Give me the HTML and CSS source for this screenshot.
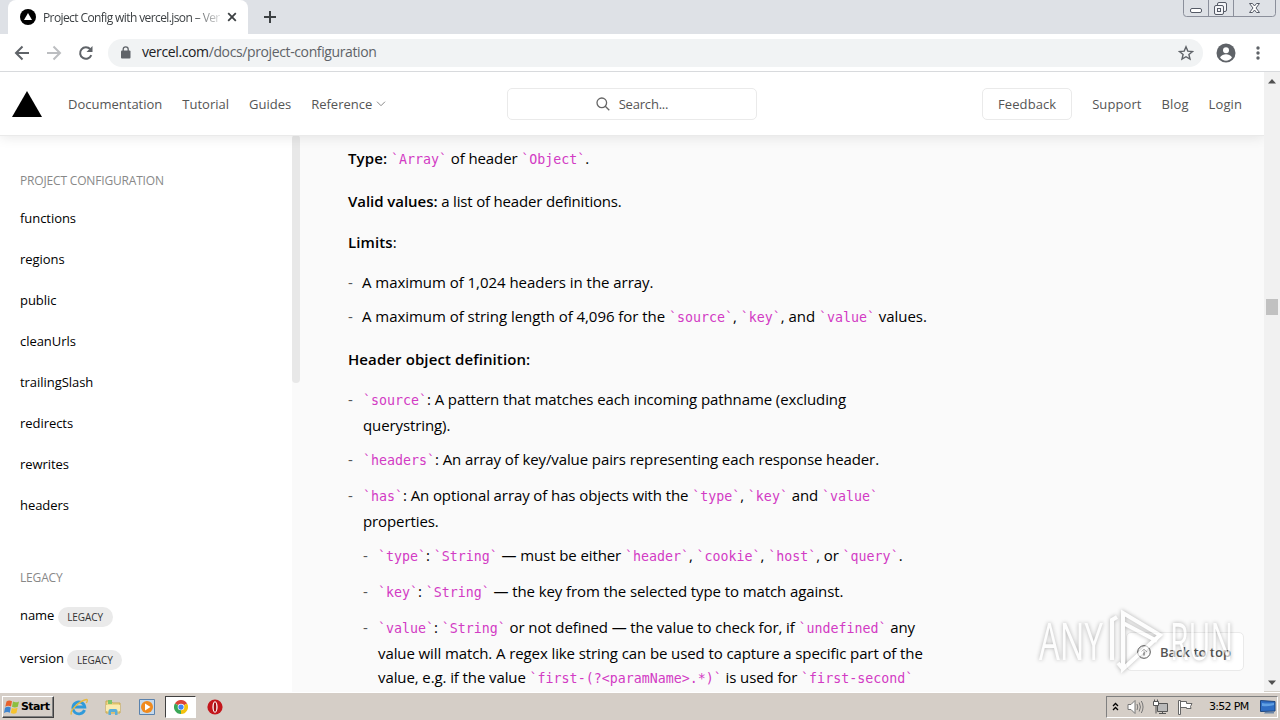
FILE: index.html
```html
<!DOCTYPE html>
<html lang="en">
<head>
    <meta charset="UTF-8">
    <meta name="viewport" content="width=device-width, initial-scale=1.0">
    <title>Project Config with vercel.json</title>
    <link rel="stylesheet" href="styles.css">
</head>
<body>
    <div class="screen">
        <div class="tabstrip">
            <div class="tab">
                <svg class="favicon" width="16" height="16" viewBox="0 0 16 16"><circle cx="8" cy="8" r="8"/><path d="M8 4l4 7H4z" fill="#fff"/></svg>
                <span class="tab-title">Project Config with vercel.json – Ver</span>
                <svg class="tab-close" width="10" height="10" viewBox="0 0 10 10"><path d="M1.2 1.2l7.6 7.6M8.8 1.2l-7.6 7.6" stroke="#3c4043" stroke-width="1.8"/></svg>
            </div>
            <svg class="new-tab" width="12" height="12" viewBox="0 0 12 12"><path d="M6 0v12M0 6h12" stroke="#3c4043" stroke-width="2"/></svg>
            <svg class="window-buttons" width="94" height="17" viewBox="0 0 94 17" fill="none" stroke="#8b8f9b">
                <path d="M.5 0v13.5q0 3 3 3h86q3 0 3-3V0M25.500 0v16M50.500 0v16"/>
                <rect x="7.500" y="8.500" width="11" height="4" rx="1.500" fill="#fff" stroke="#555a66"/>
                <g stroke="#555a66" fill="#f4f5f8"><rect x="34.500" y="2.500" width="9" height="9" rx="1.500"/><rect x="31.500" y="5.500" width="9" height="9" rx="1.500"/><rect x="34.500" y="8.500" width="3" height="3"/></g>
                <path d="M66.500 3.500h3l2 2.500 2-2.500h3l-3.500 4.500 3.500 4.500h-3l-2-2.500-2 2.500h-3L70 8z" fill="#fff" stroke="#555a66"/>
            </svg>
        </div>

        <div class="toolbar">
            <svg class="nav-back" width="16" height="16" viewBox="0 0 16 16" fill="none" stroke="#5f6368" stroke-width="2"><path d="M15 8H2M8.500 1.500L2 8l6.500 6.500"/></svg>
            <svg class="nav-forward" width="16" height="16" viewBox="0 0 16 16" fill="none" stroke="#bcbec1" stroke-width="2"><path d="M1 8h13M7.500 1.500L14 8l-6.500 6.500"/></svg>
            <svg class="nav-reload" width="16" height="16" viewBox="0 0 16 16" fill="none"><path d="M13.300 10.200A5.800 5.800 0 1 1 12.300 4.200" stroke="#5f6368" stroke-width="2"/><path d="M14.500 1v6h-6z" fill="#5f6368"/></svg>
            <div class="omnibox">
                <svg class="lock" width="10" height="13" viewBox="0 0 10 13"><rect y="4.500" width="9.500" height="8" rx="1" fill="#5f6368"/><path d="M2.200 5V3.300a2.500 2.500 0 0 1 5 0V5" fill="none" stroke="#5f6368" stroke-width="1.300"/></svg>
                <span class="url"><b>vercel.com</b>/docs/project-configuration</span>
                <svg class="star" width="16" height="16" viewBox="0 0 16 16"><path d="M8 1.800l1.800 4.300 4.700.4-3.600 3 1.100 4.600L8 11.700l-4 2.400 1.100-4.600-3.600-3 4.700-.4z" fill="none" stroke="#5f6368" stroke-width="1.400"/></svg>
            </div>
            <svg class="profile" width="20" height="20" viewBox="0 0 20 20"><circle cx="10" cy="10" r="9.500" fill="#5f6368"/><circle cx="10" cy="7.200" r="3" fill="#fff"/><path d="M4 14.300c1.400-2.100 3.700-3 6-3s4.600.9 6 3a7 7 0 0 1-12 0z" fill="#fff"/></svg>
            <svg class="kebab" width="4" height="16" viewBox="0 0 4 16" fill="#5f6368"><circle cx="2" cy="3" r="1.700"/><circle cx="2" cy="8" r="1.700"/><circle cx="2" cy="13" r="1.700"/></svg>
        </div>

        <div class="viewport">
            <div class="page">
                <header class="header">
                    <svg class="logo" width="30" height="26" viewBox="0 0 30 26"><path d="M15 0l15 26H0z"/></svg>
                    <nav class="nav">
                        <a>Documentation</a>
                        <a>Tutorial</a>
                        <a>Guides</a>
                        <a>Reference</a>
                        <svg class="chevron" width="10" height="6" viewBox="0 0 10 6"><path d="M1 .7l4 4 4-4" fill="none" stroke="#888"/></svg>
                    </nav>
                    <div class="search">
                        <svg width="14" height="14" viewBox="0 0 14 14" fill="none" stroke="#666" stroke-width="1.300"><circle cx="5.800" cy="5.800" r="4.800"/><path d="M9.300 9.300l4 4"/></svg>
                        <span>Search...</span>
                    </div>
                    <nav class="nav nav-right">
                        <a class="feedback">Feedback</a>
                        <a>Support</a>
                        <a>Blog</a>
                        <a>Login</a>
                    </nav>
                </header>

                <div class="content">
                    <aside class="sidebar">
                        <h4>PROJECT CONFIGURATION</h4>
                        <ul>
                            <li>functions</li>
                            <li>regions</li>
                            <li>public</li>
                            <li>cleanUrls</li>
                            <li>trailingSlash</li>
                            <li>redirects</li>
                            <li>rewrites</li>
                            <li>headers</li>
                        </ul>
                        <h4 class="legacy-title">LEGACY</h4>
                        <ul class="legacy">
                            <li>name <em>LEGACY</em></li>
                            <li>version <em>LEGACY</em></li>
                        </ul>
                    </aside>
                    <div class="sidebar-thumb"></div>

                    <main class="docs">
                        <p><b>Type:</b> <code>`Array`</code> of header <code>`Object`</code>.</p>
                        <p class="valid"><b>Valid values:</b> a list of header definitions.</p>
                        <p class="limits"><b>Limits</b>:</p>
                        <ul class="list limits-list">
                            <li>A maximum of 1,024 headers in the array.</li>
                            <li>A maximum of string length of 4,096 for the <code>`source`</code>, <code>`key`</code>, and <code>`value`</code> values.</li>
                        </ul>
                        <p class="definition"><b>Header object definition:</b></p>
                        <ul class="list fields">
                            <li><code>`source`</code>: A pattern that matches each incoming pathname (excluding<br>querystring).</li>
                            <li class="headers"><code>`headers`</code>: An array of key/value pairs representing each response header.</li>
                            <li><code>`has`</code>: An optional array of has objects with the <code>`type`</code>, <code>`key`</code> and <code>`value`</code><br>properties.
                                <ul class="list nested">
                                    <li><code>`type`</code>: <code>`String`</code> — must be either <code>`header`</code>, <code>`cookie`</code>, <code>`host`</code>, or <code>`query`</code>.</li>
                                    <li><code>`key`</code>: <code>`String`</code> — the key from the selected type to match against.</li>
                                    <li><code>`value`</code>: <code>`String`</code> or not defined — the value to check for, if <code>`undefined`</code> any<br>value will match. A regex like string can be used to capture a specific part of the
                                        <span class="last-line">value, e.g. if the value <code>`first-(?&lt;paramName&gt;.*)`</code> is used for <code>`first-second`</code></span></li>
                                </ul>
                            </li>
                        </ul>
                    </main>
                </div>

                <a class="back-to-top">
                    <svg width="14" height="14" viewBox="0 0 14 14" fill="none" stroke="#555"><circle cx="7" cy="7" r="6.300"/><path d="M7 10.500V4M4.500 6.500L7 4l2.500 2.500"/></svg>
                    <span>Back to top</span>
                </a>
            </div>
            <div class="scrollbar">
                <svg width="8" height="5" viewBox="0 0 8 5"><path d="M4 0l4 4.500H0z" fill="#505050"/></svg>
                <div class="scrollbar-thumb"></div>
                <svg width="8" height="5" viewBox="0 0 8 5"><path d="M0 .5h8L4 5z" fill="#505050"/></svg>
            </div>
        </div>

        <div class="taskbar">
            <div class="start">
                <svg width="16" height="16" viewBox="0 0 16 16"><path d="M2.500 2.500Q5 .8 8 2.300L7 7.500Q4 6 1.300 7.700z" fill="#e8622c"/><path d="M9 2.600q3 1.400 6-.2l-1.200 5.300q-2.800 1.500-5.800.1z" fill="#8cbf3f"/><path d="M1 8.800q3-1.800 5.800-.3l-1 5.200Q3 12.300 0 14z" fill="#3f85cf"/><path d="M7.800 8.900q3 1.300 5.800-.1l-1.200 5.200q-2.600 1.600-5.600 0z" fill="#f6c32e"/></svg>
                <span>Start</span>
            </div>
            <div class="quick">
                <svg width="18" height="18" viewBox="0 0 18 18" fill="none"><path d="M14.500 12a6 6 0 1 1 .3-3H5" stroke="#2f9ada" stroke-width="2.800"/><path d="M1.500 16.500C-1 13 10 2.500 16.500 1.500c1.500 0 .6 2.300-.2 3.500" stroke="#e8b93c" stroke-width="1.300"/></svg>
            </div>
            <div class="quick">
                <svg width="18" height="18" viewBox="0 0 18 18"><path d="M2 3h5l1.500 2H16v10H2z" fill="#efd787" stroke="#c9a94f"/><path d="M4 2h4v4H4z" fill="#7cc36a"/><path d="M2 7h14v6H2z" fill="#faebaf"/><path d="M4.500 17v-4q0-2 2-2h5q2 0 2 2v4h-2.500v-3H7v3z" fill="#5aaed8"/></svg>
            </div>
            <div class="quick">
                <svg width="16" height="16" viewBox="0 0 16 16"><path d="M.5.500h15v15H.5z" fill="#c5d9ec" stroke="#5a82ad"/><circle cx="8" cy="8" r="6" fill="#f08a1d"/><path d="M6 4.500L11.500 8 6 11.500z" fill="#fff"/></svg>
            </div>
            <div class="quick active">
                <svg width="14" height="14" viewBox="0 0 16 16"><path d="M8 8L1.070 4A8 8 0 0 1 14.930 4z" fill="#db4437"/><path d="M8 8l6.930-4A8 8 0 0 1 8 16z" fill="#f4c20d"/><path d="M8 8v8A8 8 0 0 1 1.070 4z" fill="#3aa757"/><circle cx="8" cy="8" r="3.800" fill="#fff"/><circle cx="8" cy="8" r="3" fill="#4285f4"/></svg>
            </div>
            <div class="quick">
                <svg width="16" height="16" viewBox="0 0 16 16"><circle cx="8" cy="8" r="7.600" fill="#c4161c"/><ellipse cx="8" cy="8" rx="2.600" ry="5.700" fill="#fff"/><ellipse cx="8" cy="8" rx="1.300" ry="4.800" fill="#a30d12"/></svg>
            </div>
            <div class="tray">
                <svg width="7" height="9" viewBox="0 0 7 9" fill="none" stroke="#000" stroke-width="1.300"><path d="M1 4l2.500-2.500L6 4M1 8l2.500-2.500L6 8"/></svg>
                <svg width="17" height="16" viewBox="0 0 17 16" fill="#fff" stroke="#777"><path d="M1 5.500h3l4-4v13l-4-4H1z"/><path d="M10 5q1.500 3 0 6M12.200 3.500q2.500 4.500 0 9M14.300 2q3.500 6 0 12" fill="none"/></svg>
                <svg width="17" height="16" viewBox="0 0 17 16" fill="#fff" stroke="#555"><path d="M5.500 4.500h10v8h-10z" fill="#b9b9b9"/><path d="M1.500 2.500h5v4h-5zM2.500.500v2M5.500.500v2M4 6.500v8M7 14.500h7M10.500 12.500v2"/></svg>
                <svg width="17" height="16" viewBox="0 0 17 16" fill="#fff" stroke="#666"><path d="M1.500 1.500h2v14h-2zM3.500 2.500h6v2h5.500l-1.500 3 .5 2H9.500v-1h-6z"/></svg>
                <span class="clock">3:52 PM</span>
                <svg class="desktop" width="16" height="14" viewBox="0 0 16 14"><path d="M.5.500l14.500 1v9.500l-14.500.5z" fill="#2f6ec4" stroke="#1d467f"/><path d="M2 3q6 1 12 0v2Q8 7 2 6z" fill="#62a1e3"/><path d="M5 12l9 0v1.500H4z" fill="#6d87a8"/></svg>
            </div>
        </div>

        <svg class="watermark" width="200" height="68" viewBox="0 0 200 68">
            <g class="watermark-text">
                <text x="2" y="52" textLength="64" lengthAdjust="spacingAndGlyphs">ANY</text>
                <text x="133" y="52" textLength="63" lengthAdjust="spacingAndGlyphs">RUN</text>
            </g>
            <g class="watermark-mark">
                <path d="M75 52V12l5-3"/>
                <path d="M86 5l37 22-37 34z"/>
                <path d="M86 15l34 18M81 55l5 6"/>
            </g>
        </svg>
    </div>
</body>
</html>
```
FILE: styles.css
```css
* { box-sizing: border-box; }

body {
    margin: 0;
    overflow: hidden;
    font-family: "Open Sans", "Noto Sans", sans-serif;
    color: #000;
}

ul, h4, p {
    margin: 0;
    padding: 0;
    list-style: none;
    font-weight: 400;
}

svg { flex: none; display: block; }

.screen {
    position: relative;
    display: flex;
    flex-direction: column;
    width: 1280px;
    height: 720px;
    overflow: hidden;
}

/* Browser chrome */

.tabstrip {
    display: flex;
    height: 34px;
    background: #dee1e6;
}

.tab {
    display: flex;
    align-items: center;
    width: 240px;
    margin-left: 8px;
    padding-left: 12px;
    border-radius: 8px 8px 0 0;
    background: #fff;
}

.tab-title {
    width: 177px;
    margin: 0 7px;
    white-space: nowrap;
    font-size: 12px;
    letter-spacing: -0.6px;
    color: #3c4043;
    mask-image: linear-gradient(to right, #000 150px, transparent 182px);
}

.new-tab { margin: 11px 0 0 16px; }

.window-buttons { margin-left: auto; margin-right: 3px; }

.toolbar {
    display: flex;
    align-items: center;
    height: 38px;
    padding-left: 14px;
    border-bottom: 1px solid #d8dadd;
    background: #fff;
}

.nav-forward, .nav-reload { margin-left: 16px; }

.omnibox {
    display: flex;
    align-items: center;
    width: 1095px;
    height: 28px;
    margin-left: 14px;
    padding: 0 9px 0 13px;
    border-radius: 14px;
    background: #f1f3f4;
}

.url {
    flex: 1;
    margin: -2px 0 0 11px;
    font-size: 14px;
    letter-spacing: -0.38px;
    color: #5f6368;
}

.url b { font-weight: 400; color: #202124; }

.profile { margin-left: 13px; }
.kebab { margin-left: 20px; }

/* Web page */

.viewport {
    display: flex;
    height: 620px;
}

.page {
    position: relative;
    display: flex;
    flex-direction: column;
    width: 1264px;
    overflow: hidden;
}

.header {
    position: relative;
    z-index: 1;
    display: flex;
    flex: none;
    align-items: center;
    height: 63px;
    padding: 0 22px 0 12px;
    background: #fff;
    box-shadow: 0 1px 0 #eaeaea, 0 2px 12px rgba(0, 0, 0, .1);
    font-size: 13px;
    color: #555;
}

.logo { margin-bottom: -1px; }

.nav {
    display: flex;
    align-items: center;
    gap: 20px;
    width: 317px;
    margin-left: 26px;
}

.chevron { margin-left: -16px; }

.search {
    display: flex;
    align-items: center;
    justify-content: center;
    gap: 9px;
    width: 250px;
    height: 32px;
    margin-left: 122px;
    border: 1px solid #eaeaea;
    border-radius: 5px;
}

.search span { letter-spacing: -0.2px; }

.nav-right {
    width: auto;
    margin-left: auto;
    letter-spacing: 0.1px;
}

.feedback {
    width: 90px;
    height: 32px;
    border: 1px solid #eaeaea;
    border-radius: 5px;
    line-height: 30px;
    text-align: center;
}

.content {
    display: flex;
    flex: 1;
    background: #fafafa;
}

.sidebar {
    width: 292px;
    padding: 37px 0 0 20px;
    background: #fff;
    font-size: 13px;
}

.sidebar h4 {
    font-size: 12px;
    line-height: 18px;
    letter-spacing: -0.17px;
    color: #888;
}

.sidebar ul { padding-top: 8px; }

.sidebar li {
    height: 41px;
    line-height: 41px;
    letter-spacing: -0.05px;
}

.sidebar .legacy-title { margin-top: 43px; }

.sidebar .legacy { padding-top: 7px; }

.legacy li { height: 43px; line-height: 42px; }

.legacy em {
    position: relative;
    top: 1px;
    display: inline-block;
    width: 55px;
    height: 20px;
    border-radius: 10px;
    background: #eaeaea;
    font-size: 10px;
    font-style: normal;
    line-height: 20px;
    text-align: center;
    color: #333;
}

.sidebar-thumb {
    width: 8px;
    height: 248px;
    border-radius: 4px;
    background: #e8e8e8;
}

.docs {
    padding: 10px 0 0 48px;
    font-size: 15px;
    line-height: 26px;
    letter-spacing: -0.1px;
    white-space: nowrap;
}

.docs b {
    font-weight: 600;
    letter-spacing: 0.1px;
}

.docs code {
    font: 13.3px "DejaVu Sans Mono", monospace;
    letter-spacing: 0;
    color: #d23bc4;
}

.valid { margin-top: 17px; letter-spacing: -0.18px; }
.valid b { letter-spacing: -0.05px; }
.limits { margin-top: 15px; }
.limits-list { margin-top: 14px; letter-spacing: -0.04px; }
.definition { margin-top: 17px; }
.fields { margin-top: 14px; }

.list li {
    padding-left: 14px;
    margin-bottom: 8px;
}

.list li::before {
    content: "-";
    float: left;
    margin-left: -14px;
    color: #555;
}

.fields li, .nested li { padding-left: 15px; }
.fields li::before { margin-left: -15px; }
.list .headers { margin-bottom: 10px; }
.nested { margin-top: 8px; }
.nested li { margin-bottom: 10px; }

.last-line {
    display: block;
    margin-top: -2px;
}

.back-to-top {
    position: absolute;
    right: 20px;
    bottom: 21px;
    display: flex;
    align-items: center;
    gap: 9px;
    width: 118px;
    height: 39px;
    padding-left: 10px;
    border: 1px solid #eaeaea;
    border-radius: 5px;
    background: #fff;
    font-size: 13px;
    font-weight: 600;
    color: #555;
}

.scrollbar {
    display: flex;
    flex-direction: column;
    align-items: center;
    width: 16px;
    padding: 7px 0;
    background: #f1f1f1;
}

.scrollbar-thumb {
    width: 12px;
    height: 16px;
    margin: 215px 0 auto;
    background: #c1c1c1;
}

/* Taskbar */

.taskbar {
    display: flex;
    align-items: center;
    height: 28px;
    padding: 0 2px;
    border-top: 1px solid #fff;
    box-shadow: 0 -1px 0 #d4d0c8;
    background: #d5cec7;
}

.start {
    display: flex;
    align-items: center;
    gap: 1px;
    width: 52px;
    height: 22px;
    padding-left: 1px;
    border: 1px solid;
    border-color: #fff #404040 #404040 #fff;
    box-shadow: inset -1px -1px 0 #808080;
    font: bold 11px "DejaVu Sans", sans-serif;
    letter-spacing: -0.6px;
    margin-right: 9px;
}

.quick {
    display: flex;
    align-items: center;
    justify-content: center;
    width: 31px;
    height: 22px;
    margin-right: 3px;
}

.quick.active {
    border: 1px solid;
    border-color: #404040 #fff #fff #404040;
    background: #fff;
}

.tray {
    display: flex;
    align-items: center;
    gap: 8px;
    width: 172px;
    height: 22px;
    margin-left: auto;
    padding-left: 5px;
    border: 1px solid;
    border-color: #808080 #fff #fff #808080;
}

.clock {
    width: 43px;
    margin-left: 7px;
    white-space: nowrap;
    font: 11px "DejaVu Sans", sans-serif;
    letter-spacing: -0.7px;
}

.watermark {
    position: absolute;
    left: 1037px;
    top: 608px;
    z-index: 2;
    filter: drop-shadow(0 0 2px rgba(0, 0, 0, .5));
    opacity: .6;
}

.watermark-text {
    font: 400 52px "Open Sans", sans-serif;
    fill: #fff;
}

.watermark-mark {
    fill: none;
    stroke: #fff;
    stroke-width: 4;
}
```
